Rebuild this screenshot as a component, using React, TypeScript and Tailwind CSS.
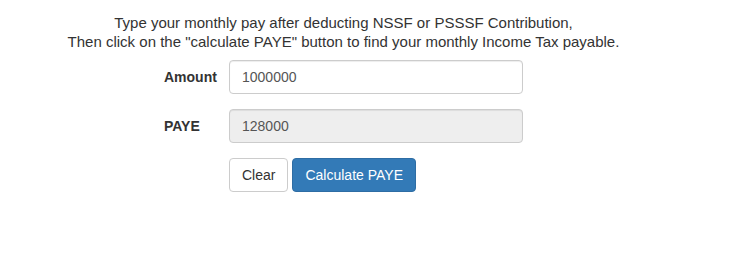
export default function App() {
  return (
    <div className="w-[735px] h-[275px] bg-white text-[#333] text-[14px] leading-[20px]" style={{ fontFamily: '"Liberation Sans", Arial, sans-serif' }}>
      <div className="w-[687px] pt-[13px]">
        {/* Instructions */}
        <p className="text-center text-[15px] leading-[19px]">
          Type your monthly pay after deducting NSSF or PSSSF Contribution,
          <br />
          Then click on the "calculate PAYE" button to find your monthly Income Tax payable.
        </p>

        {/* Form */}
        <form className="w-[359px] mx-auto mt-[9px]" onSubmit={(e) => e.preventDefault()}>
          <div className="flex items-center mb-[15px]">
            <label className="w-[65px] font-bold">Amount</label>
            <input
              type="text"
              defaultValue="1000000"
              className="w-[294px] h-[34px] px-[12px] border border-[#ccc] rounded-[4px] text-[#555] shadow-[inset_0_1px_1px_rgba(0,0,0,0.075)] outline-none"
            />
          </div>
          <div className="flex items-center mb-[15px]">
            <label className="w-[65px] font-bold">PAYE</label>
            <input
              type="text"
              readOnly
              defaultValue="128000"
              className="w-[294px] h-[34px] px-[12px] border border-[#ccc] rounded-[4px] bg-[#eee] text-[#555] shadow-[inset_0_1px_1px_rgba(0,0,0,0.075)] outline-none"
            />
          </div>
          <div className="flex gap-[4px] ml-[65px]">
            <button type="button" className="h-[34px] px-[12px] border border-[#ccc] rounded-[4px] bg-white text-[#333]">
              Clear
            </button>
            <button type="button" className="h-[34px] px-[12px] border border-[#2e6da4] rounded-[4px] bg-[#337ab7] text-white">
              Calculate PAYE
            </button>
          </div>
        </form>
      </div>
    </div>
  );
}
